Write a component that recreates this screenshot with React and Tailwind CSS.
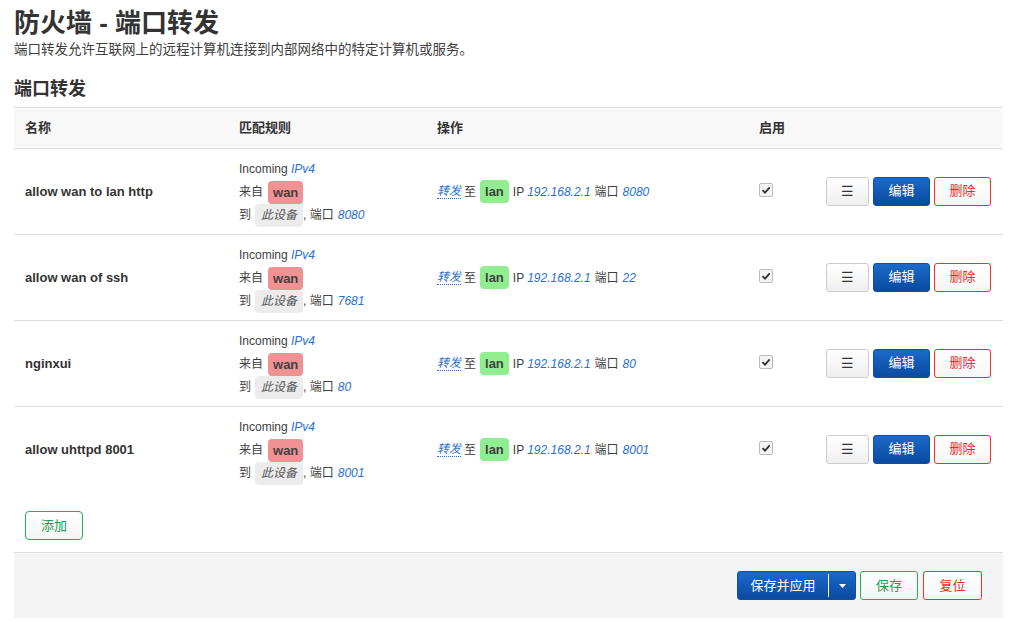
import { useState } from 'react';

const RULES = [
  { name: 'allow wan to lan http', destPort: '8080', ip: '192.168.2.1', fwdPort: '8080' },
  { name: 'allow wan of ssh', destPort: '7681', ip: '192.168.2.1', fwdPort: '22' },
  { name: 'nginxui', destPort: '80', ip: '192.168.2.1', fwdPort: '80' },
  { name: 'allow uhttpd 8001', destPort: '8001', ip: '192.168.2.1', fwdPort: '8001' },
];

const FONT = { fontFamily: '"Liberation Sans", "Noto Sans CJK SC", Arial, sans-serif' };

function Row({ rule }) {
  const [enabled, setEnabled] = useState(true);

  return (
    <div className="grid grid-cols-[214px_198px_322px_78px_1fr] items-center h-[86px] border-t border-[#ddd]">
      <div className="pl-[11px] text-[13px] font-bold text-[#333]">{rule.name}</div>
      <div className="pl-[11px] text-[12px] text-[#404040] leading-[23px] pt-[1px]">
        <div>
          Incoming <em className="text-[#2a6fd6]">IPv4</em>
        </div>
        <div className="flex items-center">
          来自
          <span className="ml-[5px] px-[5px] h-[23px] leading-[23px] rounded-[4px] bg-[#f09294] font-bold text-[13px] text-[#404040]">
            wan
          </span>
        </div>
        <div className="flex items-center">
          到
          <span className="ml-[4px] px-[6px] h-[23px] leading-[23px] rounded-[4px] bg-[#ececec] italic text-[#555]">
            此设备
          </span>
          , 端口 <em className="ml-[4px] text-[#2a6fd6]">{rule.destPort}</em>
        </div>
      </div>
      <div className="pl-[11px] text-[12px] text-[#404040] flex items-center">
        <em className="text-[#2a6fd6] border-b border-dotted border-[#2a6fd6] leading-[14px]">转发</em>
        <span className="ml-[3px]">至</span>
        <span className="ml-[4px] px-[5px] h-[23px] leading-[23px] rounded-[4px] bg-[#90ee90] font-bold text-[13px] text-[#404040]">
          lan
        </span>
        <span className="ml-[4px]">IP</span>
        <em className="ml-[3px] text-[#2a6fd6]">{rule.ip}</em>
        <span className="ml-[4px]">端口</span>
        <em className="ml-[4px] text-[#2a6fd6]">{rule.fwdPort}</em>
      </div>
      <div className="pl-[11px]">
        <button
          type="button"
          onClick={() => setEnabled(!enabled)}
          className="w-[14px] h-[14px] border border-[#bbb] rounded-[2px] bg-[#f4f4f4] flex items-center justify-center -mt-[4px]"
        >
          {enabled && (
            <svg width="10" height="10" viewBox="0 0 10 10">
              <path d="M1.5 5.2 L4 7.6 L8.7 2.3" fill="none" stroke="#333" strokeWidth="1.8" />
            </svg>
          )}
        </button>
      </div>
      <div className="flex justify-end pr-[12px] gap-[4px] -mt-[1px]">
        <button className="w-[43px] h-[29px] rounded-[3px] border border-[#ccc] bg-gradient-to-b from-white to-[#efefef] text-[#333] text-[14px]">
          ☰
        </button>
        <button className="w-[57px] h-[29px] rounded-[3px] border border-[#0d4fa3] bg-gradient-to-b from-[#1a6ac9] to-[#0b4aa0] text-white text-[13px]">
          编辑
        </button>
        <button className="w-[57px] h-[29px] rounded-[3px] border border-[#ee3322] bg-gradient-to-b from-white to-[#f6f6f6] text-[#ee2a1a] text-[13px]">
          删除
        </button>
      </div>
    </div>
  );
}

export default function App() {
  return (
    <div className="bg-white min-h-[622px] px-[14px] pt-[5px]" style={FONT}>
      <h2 className="text-[26px] font-bold text-[#333] leading-[36px]">防火墙 - 端口转发</h2>
      <p className="text-[13.5px] text-[#404040] mt-[1px] leading-[16px]">
        端口转发允许互联网上的远程计算机连接到内部网络中的特定计算机或服务。
      </p>
      <h3 className="text-[18px] font-bold text-[#333] mt-[19px] leading-[24px]">端口转发</h3>

      <div className="mt-[6px] border-t border-[#ddd]">
        <div className="grid grid-cols-[214px_198px_322px_78px_1fr] items-center h-[40px] bg-[#f8f8f8] text-[13px] font-bold text-[#333]">
          <div className="pl-[11px]">名称</div>
          <div className="pl-[11px]">匹配规则</div>
          <div className="pl-[11px]">操作</div>
          <div className="pl-[11px]">启用</div>
          <div />
        </div>
        {RULES.map((r) => (
          <Row key={r.name} rule={r} />
        ))}
      </div>

      <div className="pl-[11px] pt-[19px] pb-[12px]">
        <button className="w-[58px] h-[29px] rounded-[4px] border border-[#1db35b] bg-gradient-to-b from-white to-[#f4f4f4] text-[#1a9e50] text-[13px]">
          添加
        </button>
      </div>

      <div className="bg-[#f4f4f4] border-t border-[#ddd] h-[66px] flex items-center justify-end pr-[21px] gap-[4px]">
        <div className="flex h-[29px] rounded-[3px] border border-[#0d4fa3] bg-gradient-to-b from-[#1a6ac9] to-[#0b4aa0] text-white text-[13px]">
          <button className="w-[90px]">保存并应用</button>
          <span className="w-px bg-white my-[2px]" />
          <button className="w-[26px] flex items-center justify-center">
            <svg width="7" height="4" viewBox="0 0 7 4">
              <path d="M0 0 H7 L3.5 4 Z" fill="white" />
            </svg>
          </button>
        </div>
        <button className="w-[58px] h-[29px] rounded-[3px] border border-[#1db35b] bg-gradient-to-b from-white to-[#f4f4f4] text-[#1a9e50] text-[13px]">
          保存
        </button>
        <button className="w-[59px] h-[29px] rounded-[3px] border border-[#ee3322] bg-gradient-to-b from-white to-[#f6f6f6] text-[#ee2a1a] text-[13px] ml-[1px]">
          复位
        </button>
      </div>
    </div>
  );
}
